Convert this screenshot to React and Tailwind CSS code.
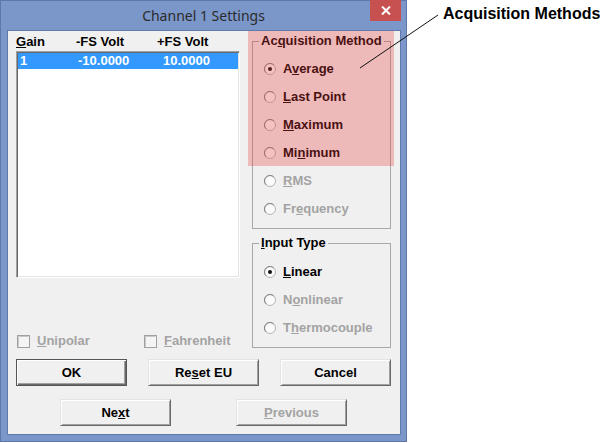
import React from "react";

function Mn({ t, i }) {
  if (i < 0) return <>{t}</>;
  return (
    <>
      {t.slice(0, i)}
      <u className="underline underline-offset-[1px]">{t[i]}</u>
      {t.slice(i + 1)}
    </>
  );
}

function RadioIcon({ checked }) {
  return (
    <svg width="12" height="12" viewBox="0 0 12 12" className="shrink-0">
      <circle cx="6" cy="6" r="5.5" fill="#fbfbfb" stroke="#b4b4b4" />
      <path d="M2.1 9.9 A5.5 5.5 0 0 1 9.9 2.1" fill="none" stroke="#858585" />
      {checked && <circle cx="6" cy="6" r="2" fill="#111" />}
    </svg>
  );
}

function Radio({ t, i, checked, disabled }) {
  return (
    <div className="flex items-center h-[28px] pl-[11px] gap-[7px]">
      <RadioIcon checked={checked} />
      <span className={disabled ? "text-[#a3a3a3]" : "text-black"}>
        <Mn t={t} i={i} />
      </span>
    </div>
  );
}

function Check({ t, i }) {
  return (
    <div className="flex items-center gap-[7px] h-[16px]">
      <svg width="13" height="13" viewBox="0 0 13 13" className="shrink-0">
        <rect x="0.5" y="0.5" width="12" height="12" fill="#f4f4f4" stroke="#a0a0a0" />
        <path d="M1.5 11.5 V1.5 H11.5" fill="none" stroke="#c8c8c8" />
      </svg>
      <span className="text-[#a3a3a3]">
        <Mn t={t} i={i} />
      </span>
    </div>
  );
}

function Btn({ children, def, disabled }) {
  const base =
    "w-[111px] h-[27px] flex items-center justify-center bg-[#f0f0f0] box-border";
  const normal =
    " border border-t-[#e3e3e3] border-l-[#e3e3e3] border-r-[#696969] border-b-[#696969] shadow-[inset_1px_1px_0_#ffffff,inset_-1px_-1px_0_#a0a0a0]";
  const deflt =
    " border border-[#555555] shadow-[inset_1px_1px_0_#ffffff,inset_-1px_-1px_0_#696969,inset_-2px_-2px_0_#a0a0a0]";
  return (
    <div className={base + (def ? deflt : normal)}>
      <span className={disabled ? "text-[#a3a3a3]" : "text-black"}>{children}</span>
    </div>
  );
}

export default function App() {
  return (
    <div className="relative w-[600px] h-[443px] bg-white flex items-start overflow-hidden font-['Liberation_Sans',Arial,sans-serif]">
      {/* Window */}
      <div className="relative w-[407px] h-[442px] shrink-0 bg-[#7b97c9] border border-[#5d77ab] box-border flex flex-col">
        <div className="h-[29px] flex items-center justify-center">
          <span className="font-['Noto_Sans',sans-serif] text-[14px] leading-none text-[#2b2b2b] pt-[1px]">
            Channel 1 Settings
          </span>
        </div>
        <div className="absolute left-[369px] -top-px w-[31px] h-[21px] bg-[#c75050] flex items-center justify-center">
          <svg width="10" height="9" viewBox="0 0 10 9">
            <path d="M1 0.5 L9 8.5 M9 0.5 L1 8.5" stroke="#fff" strokeWidth="2" />
          </svg>
        </div>

        {/* Client */}
        <div className="ml-[6px] w-[394px] h-[405px] box-border border border-[#5f79ad] bg-[#f0f0f0] text-[13px] font-bold leading-[16px]">
          <div className="pl-[8px] flex items-start">
            {/* Left column */}
            <div className="w-[224px] flex flex-col">
              <div className="h-[20px] flex items-center pt-[1px]">
                <span className="w-[60px]">
                  <Mn t="Gain" i={0} />
                </span>
                <span className="w-[81px]">-FS Volt</span>
                <span>+FS Volt</span>
              </div>
              <div className="h-[227px] box-border bg-white border border-t-[#a0a0a0] border-l-[#a0a0a0] border-r-white border-b-white shadow-[inset_1px_1px_0_#696969,inset_-1px_-1px_0_#e3e3e3] p-[1px]">
                <div className="h-[16px] bg-[#3399ff] text-white flex items-center">
                  <span className="w-[60px] pl-[2px]">1</span>
                  <span className="w-[85px]">-10.0000</span>
                  <span>10.0000</span>
                </div>
              </div>
              <div className="mt-[55px] flex items-center pl-[1px]">
                <div className="w-[127px]">
                  <Check t="Unipolar" i={0} />
                </div>
                <Check t="Fahrenheit" i={0} />
              </div>
            </div>

            {/* Right column */}
            <div className="ml-[12px] w-[139px] flex flex-col">
              <fieldset className="mt-[3px] h-[195px] box-border border border-[#a8a8a8]">
                <legend className="ml-[6px] px-[2px] leading-[14px]">
                  <Mn t="Acquisition Method" i={2} />
                </legend>
                <div className="pt-[7px]">
                  <Radio t="Average" i={1} checked />
                  <Radio t="Last Point" i={0} />
                  <Radio t="Maximum" i={0} />
                  <Radio t="Minimum" i={2} />
                  <Radio t="RMS" i={0} disabled />
                  <Radio t="Frequency" i={2} disabled />
                </div>
              </fieldset>
              <fieldset className="mt-[7px] h-[112px] box-border border border-[#a8a8a8]">
                <legend className="ml-[6px] px-[2px] leading-[14px]">
                  <Mn t="Input Type" i={0} />
                </legend>
                <div className="pt-[8px]">
                  <Radio t="Linear" i={0} checked />
                  <Radio t="Nonlinear" i={1} disabled />
                  <Radio t="Thermocouple" i={1} disabled />
                </div>
              </fieldset>
            </div>
          </div>

          <div className="mt-[10px] pl-[8px] flex gap-[21px]">
            <Btn def>OK</Btn>
            <Btn>
              <Mn t="Reset EU" i={2} />
            </Btn>
            <Btn>Cancel</Btn>
          </div>
          <div className="mt-[13px] pl-[52px] flex gap-[65px]">
            <Btn>
              <Mn t="Next" i={2} />
            </Btn>
            <Btn disabled>
              <Mn t="Previous" i={0} />
            </Btn>
          </div>
        </div>

        {/* Highlight overlay */}
        <div className="absolute left-[247px] top-[30px] w-[146px] h-[135px] bg-[rgba(236,60,60,0.3)] pointer-events-none" />
      </div>

      {/* Annotation */}
      <div className="pl-[36px] pt-[5px] text-[16px] leading-[18px] font-bold text-black whitespace-nowrap">
        Acquisition Methods
      </div>

      <svg className="absolute left-0 top-0 pointer-events-none" width="600" height="443" viewBox="0 0 600 443">
        <line x1="438" y1="15" x2="360" y2="68" stroke="#111" strokeWidth="1" />
      </svg>
    </div>
  );
}
